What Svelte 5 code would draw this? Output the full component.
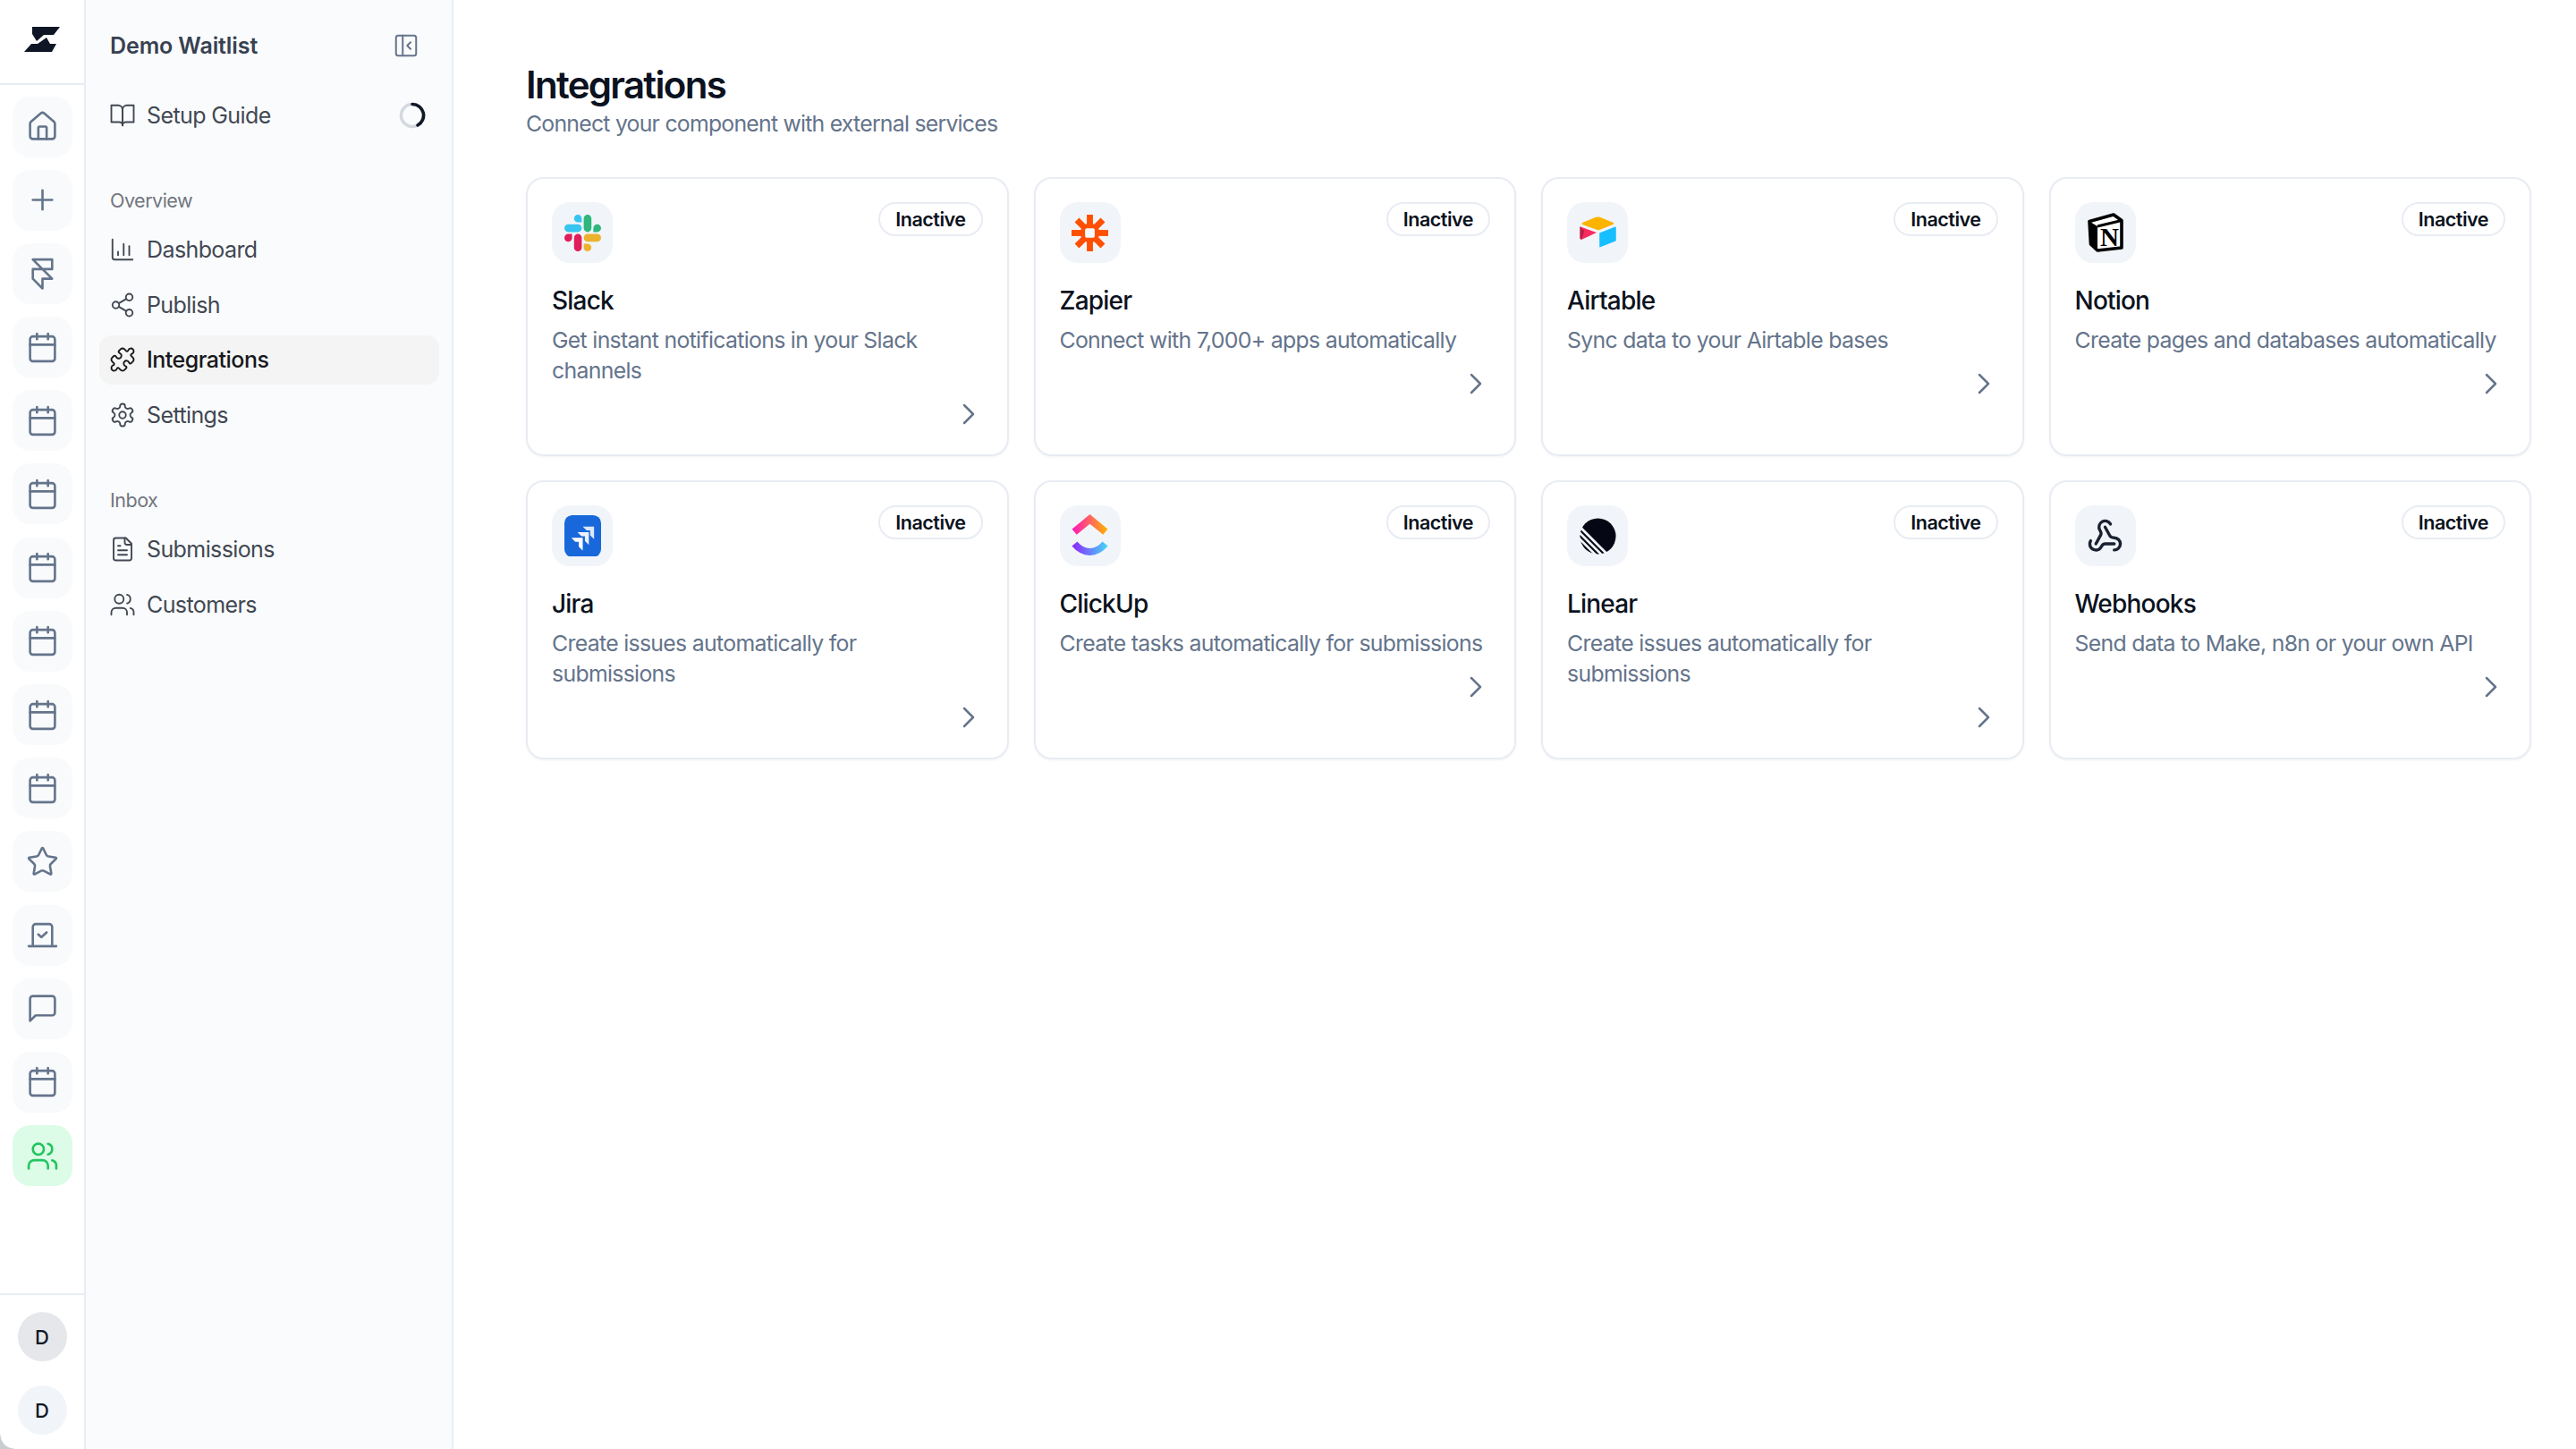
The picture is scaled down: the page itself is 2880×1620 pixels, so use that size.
<script lang="ts">
	const calendar = ['M8 2v4', 'M16 2v4', 'M5 4h14a2 2 0 0 1 2 2v14a2 2 0 0 1-2 2H5a2 2 0 0 1-2-2V6a2 2 0 0 1 2-2z', 'M3 10h18'];
	const users = [
		'M16 21v-2a4 4 0 0 0-4-4H6a4 4 0 0 0-4 4v2',
		'M9 3a4 4 0 1 0 0 8a4 4 0 1 0 0-8z',
		'M22 21v-2a4 4 0 0 0-3-3.87',
		'M16 3.13a4 4 0 0 1 0 7.75'
	];
	const icons: Record<string, string[]> = {
		home: [
			'M15 21v-8a1 1 0 0 0-1-1h-4a1 1 0 0 0-1 1v8',
			'M3 10a2 2 0 0 1 .709-1.528l7-5.999a2 2 0 0 1 2.582 0l7 5.999A2 2 0 0 1 21 10v9a2 2 0 0 1-2 2H5a2 2 0 0 1-2-2z'
		],
		plus: ['M5 12h14', 'M12 5v14'],
		framer: ['M5 16V9h14V2H5l14 14h-7v7L5 16z'],
		calendar,
		star: [
			'M11.525 2.295a.53.53 0 0 1 .95 0l2.31 4.679a2.123 2.123 0 0 0 1.595 1.16l5.166.756a.53.53 0 0 1 .294.904l-3.736 3.638a2.123 2.123 0 0 0-.611 1.878l.882 5.14a.53.53 0 0 1-.771.56l-4.618-2.428a2.122 2.122 0 0 0-1.973 0L6.396 21.01a.53.53 0 0 1-.77-.56l.881-5.139a2.122 2.122 0 0 0-.611-1.879L2.16 9.795a.53.53 0 0 1 .294-.906l5.165-.755a2.122 2.122 0 0 0 1.597-1.16z'
		],
		laptop: ['M5 19V6a2 2 0 0 1 2-2h10a2 2 0 0 1 2 2v13', 'M2 20h20', 'm9 11.5 2.2 2 3.8-3.5'],
		message: ['M21 15a2 2 0 0 1-2 2H7l-4 4V5a2 2 0 0 1 2-2h14a2 2 0 0 1 2 2z'],
		users,
		book: ['M2 3h6a4 4 0 0 1 4 4v14a3 3 0 0 0-3-3H2z', 'M22 3h-6a4 4 0 0 0-4 4v14a3 3 0 0 1 3-3h7z'],
		chart: ['M3 3v16a2 2 0 0 0 2 2h16', 'M8 17v-3', 'M13 17V7', 'M18 17V9'],
		share: [
			'M18 2a3 3 0 1 0 0 6a3 3 0 1 0 0-6z',
			'M6 9a3 3 0 1 0 0 6a3 3 0 1 0 0-6z',
			'M18 16a3 3 0 1 0 0 6a3 3 0 1 0 0-6z',
			'm8.59 13.51 6.83 3.98',
			'm15.41 6.51-6.82 3.98'
		],
		puzzle: [
			'M19.439 7.85c-.049.322.059.648.289.878l1.568 1.568c.47.47.706 1.087.706 1.704s-.235 1.233-.706 1.704l-1.611 1.611a.98.98 0 0 1-.837.276c-.47-.07-.802-.48-.968-.925a2.501 2.501 0 1 0-3.214 3.214c.446.166.855.497.925.968a.979.979 0 0 1-.276.837l-1.61 1.61a2.404 2.404 0 0 1-1.705.707 2.402 2.402 0 0 1-1.704-.706l-1.568-1.568a1.026 1.026 0 0 0-.877-.29c-.493.074-.84.504-1.02.968a2.5 2.5 0 1 1-3.237-3.237c.464-.18.894-.527.967-1.02a1.026 1.026 0 0 0-.289-.877l-1.568-1.568A2.402 2.402 0 0 1 1.998 12c0-.617.236-1.234.706-1.704L4.23 8.77c.24-.24.581-.353.917-.303.515.077.877.528 1.073 1.01a2.5 2.5 0 1 0 3.259-3.259c-.482-.196-.933-.558-1.01-1.073-.05-.336.062-.676.303-.917l1.525-1.525A2.402 2.402 0 0 1 12 1.998c.617 0 1.234.236 1.704.706l1.568 1.568c.23.23.556.338.877.29.493-.074.84-.504 1.02-.968a2.5 2.5 0 1 1 3.237 3.237c-.464.18-.894.527-.967 1.02Z'
		],
		settings: [
			'M12.22 2h-.44a2 2 0 0 0-2 2v.18a2 2 0 0 1-1 1.73l-.43.25a2 2 0 0 1-2 0l-.15-.08a2 2 0 0 0-2.73.73l-.22.38a2 2 0 0 0 .73 2.73l.15.1a2 2 0 0 1 1 1.72v.51a2 2 0 0 1-1 1.74l-.15.09a2 2 0 0 0-.73 2.73l.22.38a2 2 0 0 0 2.73.73l.15-.08a2 2 0 0 1 2 0l.43.25a2 2 0 0 1 1 1.73V20a2 2 0 0 0 2 2h.44a2 2 0 0 0 2-2v-.18a2 2 0 0 1 1-1.73l.43-.25a2 2 0 0 1 2 0l.15.08a2 2 0 0 0 2.73-.73l.22-.39a2 2 0 0 0-.73-2.73l-.15-.08a2 2 0 0 1-1-1.74v-.5a2 2 0 0 1 1-1.74l.15-.09a2 2 0 0 0 .73-2.73l-.22-.38a2 2 0 0 0-2.73-.73l-.15.08a2 2 0 0 1-2 0l-.43-.25a2 2 0 0 1-1-1.73V4a2 2 0 0 0-2-2z',
			'M12 9a3 3 0 1 0 0 6a3 3 0 1 0 0-6z'
		],
		file: [
			'M15 2H6a2 2 0 0 0-2 2v16a2 2 0 0 0 2 2h12a2 2 0 0 0 2-2V7z',
			'M14 2v4a2 2 0 0 0 2 2h4',
			'M10 9H8',
			'M16 13H8',
			'M16 17H8'
		],
		panel: ['M5 3h14a2 2 0 0 1 2 2v14a2 2 0 0 1-2 2H5a2 2 0 0 1-2-2V5a2 2 0 0 1 2-2z', 'M9 3v18', 'm16 15-3-3 3-3'],
		chevron: ['m9 18 6-6-6-6'],
		webhook: [
			'M18 16.98h-5.99c-1.1 0-1.95.94-2.48 1.9A4 4 0 0 1 2 17c.01-.7.2-1.4.57-2',
			'm6 17 3.13-5.78c.53-.97.1-2.18-.5-3.1a4 4 0 1 1 6.89-4.06',
			'm12 6 3.13 5.73C15.66 12.7 16.9 13 18 13a4 4 0 0 1 0 8'
		]
	};

	const rail = [
		'home', 'plus', 'framer', 'calendar', 'calendar', 'calendar', 'calendar', 'calendar',
		'calendar', 'calendar', 'star', 'laptop', 'message', 'calendar', 'users'
	];
	const overview = [
		{ label: 'Dashboard', icon: 'chart' },
		{ label: 'Publish', icon: 'share' },
		{ label: 'Integrations', icon: 'puzzle', active: true },
		{ label: 'Settings', icon: 'settings' }
	];
	const inbox = [
		{ label: 'Submissions', icon: 'file' },
		{ label: 'Customers', icon: 'users' }
	];
	const cards = [
		{ name: 'Slack', desc: 'Get instant notifications in your Slack channels' },
		{ name: 'Zapier', desc: 'Connect with 7,000+ apps automatically' },
		{ name: 'Airtable', desc: 'Sync data to your Airtable bases' },
		{ name: 'Notion', desc: 'Create pages and databases automatically' },
		{ name: 'Jira', desc: 'Create issues automatically for submissions' },
		{ name: 'ClickUp', desc: 'Create tasks automatically for submissions' },
		{ name: 'Linear', desc: 'Create issues automatically for submissions' },
		{ name: 'Webhooks', desc: 'Send data to Make, n8n or your own API' }
	];
	const spokes = [0, 45, 90, 135];
</script>

{#snippet icon(name: string, cls: string)}
	<svg class={cls} viewBox="0 0 24 24" fill="none" stroke="currentColor" stroke-linecap="round" stroke-linejoin="round">
		{#each icons[name] as d}
			<path {d} />
		{/each}
	</svg>
{/snippet}

{#snippet logo(name: string)}
	{#if name === 'Slack'}
		<svg class="logo" viewBox="0 0 122.8 122.8">
			<path fill="#E01E5A" d="M25.8 77.6c0 7.1-5.8 12.9-12.9 12.9S0 84.7 0 77.6s5.8-12.9 12.9-12.9h12.9v12.9zM32.3 77.6c0-7.1 5.8-12.9 12.9-12.9s12.9 5.8 12.9 12.9v32.3c0 7.1-5.8 12.9-12.9 12.9s-12.9-5.8-12.9-12.9V77.6z" />
			<path fill="#36C5F0" d="M45.2 25.8c-7.1 0-12.9-5.8-12.9-12.9S38.1 0 45.2 0s12.9 5.8 12.9 12.9v12.9H45.2zM45.2 32.3c7.1 0 12.9 5.8 12.9 12.9s-5.8 12.9-12.9 12.9H12.9C5.8 58.1 0 52.3 0 45.2s5.8-12.9 12.9-12.9h32.3z" />
			<path fill="#2EB67D" d="M97 45.2c0-7.1 5.8-12.9 12.9-12.9s12.9 5.8 12.9 12.9-5.8 12.9-12.9 12.9H97V45.2zM90.5 45.2c0 7.1-5.8 12.9-12.9 12.9s-12.9-5.8-12.9-12.9V12.9C64.7 5.8 70.5 0 77.6 0s12.9 5.8 12.9 12.9v32.3z" />
			<path fill="#ECB22E" d="M77.6 97c7.1 0 12.9 5.8 12.9 12.9s-5.8 12.9-12.9 12.9-12.9-5.8-12.9-12.9V97h12.9zM77.6 90.5c-7.1 0-12.9-5.8-12.9-12.9s5.8-12.9 12.9-12.9h32.3c7.1 0 12.9 5.8 12.9 12.9s-5.8 12.9-12.9 12.9H77.6z" />
		</svg>
	{:else if name === 'Zapier'}
		<svg class="logo" viewBox="0 0 42 42">
			{#each spokes as a}
				<rect x="17.5" y="0" width="7" height="42" fill="#ff4f00" transform="rotate({a} 21 21)" />
			{/each}
			<circle cx="21" cy="21" r="11" fill="#ff4f00" />
			<rect x="15.5" y="15.5" width="11" height="11" rx="2" fill="#f8fafc" />
		</svg>
	{:else if name === 'Airtable'}
		<svg class="logo" viewBox="0 0 42 36">
			<path fill="#fcb400" stroke="#fcb400" stroke-width="1.5" stroke-linejoin="round" d="M19 1.5 4 7.5q-1 .6 0 1.2l16.5 6q1 .3 2 0L38 8.5q1-.5 0-1L23 1.5q-2-.7-4 0z" />
			<path fill="#18bfff" stroke="#18bfff" stroke-width="1.5" stroke-linejoin="round" d="M23.5 19.5v15l17.5-7V12.5z" />
			<path fill="#f82b60" d="M.5 11.5v14l2 1 17-8z" />
			<path fill="#ba1e45" d="M.5 11.5v14l2 1 3-10z" />
		</svg>
	{:else if name === 'Notion'}
		<svg class="logo notion" viewBox="0 0 42 44">
			<path fill="#fff" stroke="#000" stroke-width="3.6" stroke-linejoin="round" d="M3 9.5 30 2l9 6.5V39L12 42l-7.500-7z" />
			<path fill="#000" d="M3 9.500 12 15v27l-7.500-7z" />
			<path fill="none" stroke="#000" stroke-width="3.2" stroke-linejoin="round" d="M12 15l27-6.500" />
			<text x="25.500" y="37" text-anchor="middle" font-family="'Liberation Serif', serif" font-weight="700" font-size="29">N</text>
		</svg>
	{:else if name === 'Jira'}
		<svg class="logo" viewBox="0 0 42 48">
			<rect width="42" height="48" rx="9" fill="#1868db" />
			<path fill="#fff" d="M21 13h13v14.500l-4.500-4.500v-5.500h-4z" opacity=".85" />
			<path fill="#fff" d="M15 19.500h13v14.500l-4.500-4.500V24h-4z" opacity=".92" />
			<path fill="#fff" d="M8 26h13v14.500L16.500 36v-5.500h-4z" />
		</svg>
	{:else if name === 'ClickUp'}
		<svg class="logo" viewBox="0 0 36 42">
			<defs>
				<linearGradient id="cu-top" x1="0" x2="1" y1="0" y2="0">
					<stop offset="0" stop-color="#ff14c0" />
					<stop offset="1" stop-color="#ffb300" />
				</linearGradient>
				<linearGradient id="cu-bot" x1="0" x2="1" y1="0" y2="0">
					<stop offset="0" stop-color="#8930fd" />
					<stop offset="1" stop-color="#49ccf9" />
				</linearGradient>
			</defs>
			<path fill="url(#cu-top)" d="M18 0 35.500 14.500 31 20 18 9.500 5 20 .5 14.500z" />
			<path fill="none" stroke="url(#cu-bot)" stroke-width="7" d="M3 29c9 10.500 21 10.500 30 0" />
		</svg>
	{:else if name === 'Linear'}
		<svg class="logo" viewBox="0 0 42 42">
			<circle cx="21" cy="21" r="20.500" fill="#050814" />
			<g stroke="#f1f5f9" stroke-width="2.800">
				<path d="M-2 8 34 44" />
				<path d="M-3 14 28 45" />
				<path d="M-4 20 22 46" />
			</g>
		</svg>
	{:else}
		<svg class="logo webhook" viewBox="0 0 24 24" fill="none" stroke="#1a2232" stroke-width="2" stroke-linecap="round" stroke-linejoin="round">
			{#each icons.webhook as d}
				<path {d} />
			{/each}
		</svg>
	{/if}
{/snippet}

<div class="app">
	<aside class="rail">
		<div class="rail-top">
			<svg class="brand" viewBox="0 0 40 28">
				<path fill="#0e1626" d="M9 0h31l-7 9H22l-8 7-5-8z" />
				<path fill="#0e1626" d="M0 28l8-9h7l10-7 4 7h7l-5 9z" />
			</svg>
		</div>
		<nav class="rail-nav">
			{#each rail as name, i}
				<div class="tile" class:green={i === rail.length - 1}>
					{@render icon(name, 'rail-icon')}
				</div>
			{/each}
		</nav>
		<div class="rail-foot">
			<div class="avatar first">D</div>
			<div class="avatar">D</div>
		</div>
		<div class="corner"></div>
	</aside>

	<aside class="side">
		<div class="side-head">
			<span class="side-title">Demo Waitlist</span>
			{@render icon('panel', 'panel-icon')}
		</div>
		<div class="item guide">
			{@render icon('book', 'nav-icon')}
			<span>Setup Guide</span>
			<svg class="spinner" viewBox="0 0 30 30" fill="none" stroke-width="3.600">
				<circle cx="15" cy="15" r="12.500" stroke="#d5d9df" />
				<path d="M15 2.500A12.500 12.500 0 0 1 21 26" stroke="#111827" stroke-linecap="round" />
			</svg>
		</div>
		<div class="label">Overview</div>
		<div class="items">
			{#each overview as item}
				<div class="item" class:active={item.active}>
					{@render icon(item.icon, 'nav-icon')}
					<span>{item.label}</span>
				</div>
			{/each}
		</div>
		<div class="label inbox">Inbox</div>
		<div class="items">
			{#each inbox as item}
				<div class="item">
					{@render icon(item.icon, 'nav-icon')}
					<span>{item.label}</span>
				</div>
			{/each}
		</div>
	</aside>

	<main class="main">
		<h1>Integrations</h1>
		<p class="sub">Connect your component with external services</p>
		<div class="grid">
			{#each cards as card}
				<div class="card">
					<div class="card-top">
						<div class="logo-tile">{@render logo(card.name)}</div>
						<span class="badge">Inactive</span>
					</div>
					<div class="name">{card.name}</div>
					<p class="desc">{card.desc}</p>
					<div class="go">{@render icon('chevron', 'chev')}</div>
				</div>
			{/each}
		</div>
	</main>
</div>

<style>
	:global(body) {
		margin: 0;
		background: #fff;
	}
	.app {
		display: flex;
		height: 1620px;
		overflow: hidden;
		font-family: Inter, 'Liberation Sans', sans-serif;
		color: #111827;
	}
	.rail {
		position: relative;
		width: 94px;
		flex: none;
		display: flex;
		flex-direction: column;
		border-right: 2px solid #e8ecf3;
		box-sizing: content-box;
	}
	.corner {
		position: absolute;
		left: 0;
		bottom: 0;
		width: 16px;
		height: 16px;
		background: radial-gradient(circle at 100% 0, transparent 15px, #c9ccd1 16px);
	}
	.rail-top {
		height: 93px;
		flex: none;
		display: flex;
		align-items: center;
		justify-content: center;
		border-bottom: 2px solid #e8ecf3;
	}
	.brand {
		width: 40px;
		height: 28px;
		margin-bottom: 5px;
	}
	.rail-nav {
		flex: 1;
		display: flex;
		flex-direction: column;
		align-items: center;
		gap: 14.2px;
		padding-top: 12.5px;
	}
	.tile {
		width: 67px;
		height: 68px;
		border-radius: 20px;
		background: #f8fafc;
		color: #64748b;
		display: flex;
		align-items: center;
		justify-content: center;
	}
	.tile.green {
		background: #dcfce7;
		color: #22c55e;
	}
	:global(.rail-icon) {
		width: 37px;
		height: 37px;
		stroke-width: 1.7;
	}
	.rail-foot {
		height: 174px;
		flex: none;
		box-sizing: border-box;
		border-top: 2px solid #e8ecf3;
		display: flex;
		flex-direction: column;
		align-items: center;
		gap: 27px;
		padding-top: 19px;
	}
	.avatar {
		width: 55px;
		height: 55px;
		border-radius: 50%;
		background: #f1f5f9;
		display: flex;
		align-items: center;
		justify-content: center;
		font-size: 22px;
		font-weight: 500;
		color: #111827;
	}
	.avatar.first {
		background: #e5e7eb;
	}
	.side {
		width: 411px;
		flex: none;
		background: #fafbfc;
		border-right: 2px solid #e8ecf3;
		padding: 0 14px 0 15px;
		box-sizing: border-box;
	}
	.side-head {
		height: 101px;
		display: flex;
		align-items: center;
		justify-content: space-between;
		padding: 0 22px 0 12px;
	}
	.side-title {
		font-size: 25px;
		letter-spacing: -0.1px;
		font-weight: 600;
		color: #374151;
	}
	:global(.panel-icon) {
		width: 30px;
		height: 30px;
		color: #64748b;
		stroke-width: 1.6;
	}
	.items {
		display: flex;
		flex-direction: column;
		gap: 6.6px;
	}
	.item {
		height: 55px;
		display: flex;
		align-items: center;
		gap: 12px;
		padding: 0 11px;
		border-radius: 14px;
		font-size: 25px;
		letter-spacing: -0.6px;
		color: #414853;
	}
	.item.active {
		background: #f4f4f5;
		color: #18181b;
		font-weight: 500;
		letter-spacing: -0.5px;
	}
	.spinner {
		width: 30px;
		height: 30px;
		margin-left: auto;
		margin-right: 4px;
	}
	:global(.nav-icon) {
		width: 30px;
		height: 30px;
		flex: none;
		stroke-width: 1.5;
	}
	.label {
		font-size: 21.5px;
		letter-spacing: -0.5px;
		line-height: 30px;
		color: #71767f;
		padding: 0 12px;
		margin-top: 53px;
		margin-bottom: 12.5px;
	}
	.main {
		flex: 1;
		min-width: 0;
		padding: 70px 50px 0 81px;
		box-sizing: border-box;
	}
	h1 {
		margin: 0;
		font-size: 42px;
		line-height: 50px;
		font-weight: 600;
		color: #0b1220;
		letter-spacing: -1.7px;
	}
	.sub {
		margin: 0 0 42px;
		font-size: 24.8px;
		letter-spacing: -0.76px;
		line-height: 36px;
		color: #64748b;
	}
	.grid {
		display: grid;
		grid-template-columns: repeat(4, 1fr);
		gap: 27px 28px;
	}
	.card {
		display: flex;
		flex-direction: column;
		background: #fff;
		border: 2px solid #e8ecf3;
		border-radius: 20px;
		padding: 26px 27px 31px 27px;
		box-shadow: 0 1px 3px rgba(15, 23, 42, 0.05);
	}
	.card-top {
		display: flex;
		align-items: flex-start;
		justify-content: space-between;
	}
	.logo-tile {
		width: 68px;
		height: 68px;
		border-radius: 20px;
		background: #f1f5f9;
		display: flex;
		align-items: center;
		justify-content: center;
	}
	:global(.logo) {
		width: 41px;
		height: auto;
		display: block;
	}
	:global(.logo.notion) {
		width: 42px;
	}
	.badge {
		height: 38px;
		box-sizing: border-box;
		padding: 0 17px;
		border: 2px solid #e8ecf3;
		border-radius: 19px;
		display: flex;
		align-items: center;
		font-size: 21.5px;
		letter-spacing: -0.5px;
		font-weight: 600;
		color: #0b1220;
	}
	.name {
		margin-top: 23px;
		font-size: 28px;
		letter-spacing: -0.8px;
		line-height: 38px;
		font-weight: 500;
		color: #0b1220;
	}
	.desc {
		margin: 8px 0 0;
		font-size: 24.8px;
		letter-spacing: -0.68px;
		line-height: 34px;
		color: #64748b;
	}
	.go {
		margin-top: 18px;
		display: flex;
		justify-content: flex-end;
		height: 28px;
		align-items: center;
	}
	:global(.chev) {
		width: 40px;
		height: 40px;
		color: #64748b;
		stroke-width: 1.5;
		margin-right: -4px;
	}
</style>
